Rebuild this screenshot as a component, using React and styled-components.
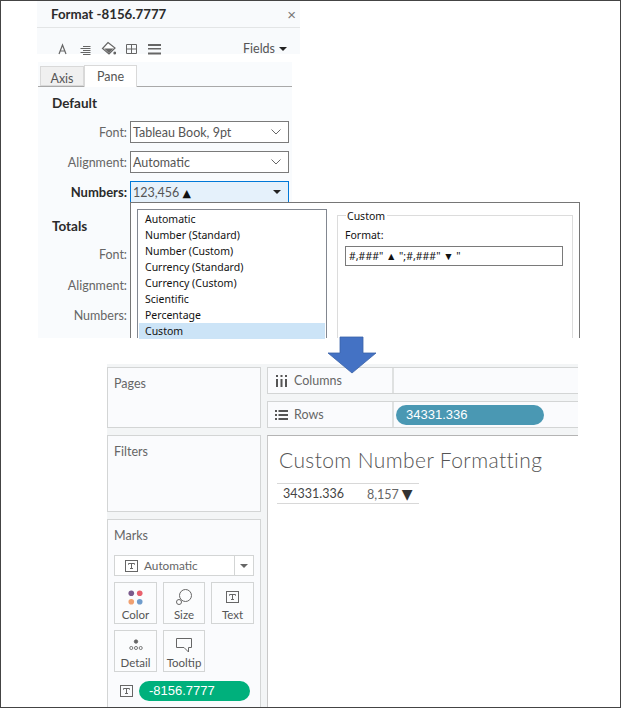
import styled, { createGlobalStyle } from 'styled-components';

const GlobalStyle = createGlobalStyle`
  * { box-sizing: border-box; }
  html, body { margin: 0; padding: 0; background: #fff; overflow: hidden; }
  body { font-family: Lato, "Liberation Sans", sans-serif; }
`;

const Frame = styled.div`
  position: relative;
  width: 621px;
  height: 708px;
  border: 1px solid #444;
  display: flex;
  flex-direction: column;
  background: #fff;
  overflow: hidden;
`;

/* ---------- format pane ---------- */

const TopArea = styled.div`
  position: relative;
  height: 363px;
  padding-left: 36px;
  flex: none;
`;

const FormatWindow = styled.div`
  width: 263px;
`;

const FormatHeader = styled.div`
  height: 27px;
  background: #f8fafc;
  border-bottom: 1px solid #e3e5e6;
  padding: 0 4px 0 14px;
  display: flex;
  align-items: center;
  justify-content: space-between;
  font-size: 13.3px;
  font-weight: 700;
  color: #2b2b2b;
`;

const CloseX = styled.span`
  font-family: "Liberation Sans", sans-serif;
  font-size: 15px;
  font-weight: 400;
  color: #777;
`;

const Toolbar = styled.div`
  height: 26px;
  background: #f8fafc;
  padding: 0 13px 0 18px;
  display: flex;
  align-items: flex-end;
  gap: 8px;
`;

const ToolIcon = styled.svg`
  width: 15px;
  height: 15px;
  flex: none;
  margin-bottom: -2px;
  color: #666;
`;

const FieldsButton = styled.span`
  margin-left: auto;
  margin-bottom: -2px;
  font-size: 12.5px;
  color: #555;
  line-height: 14px;
  display: flex;
  align-items: center;
  gap: 4px;
`;

const SmallCaret = styled.i`
  width: 0;
  height: 0;
  border-left: 4px solid transparent;
  border-right: 4px solid transparent;
  border-top: 4px solid ${(p) => p.$color || '#222'};
`;

const PaneBox = styled.div`
  width: 254px;
  height: 276px;
  margin: 8px 0 0 1px;
  background: #f9fbfd;
  overflow: hidden;
`;

const TabBar = styled.div`
  height: 25px;
  padding: 4px 0 0 2px;
  display: flex;
  align-items: flex-end;
  border-bottom: 1px solid #a9a9a9;
`;

const Tab = styled.div`
  height: ${(p) => (p.$active ? 22 : 20)}px;
  width: ${(p) => (p.$active ? 53 : 44)}px;
  margin-bottom: ${(p) => (p.$active ? -1 : 0)}px;
  background: ${(p) => (p.$active ? '#fff' : '#f0f0f0')};
  border: 1px solid #d9d9d9;
  border-bottom: ${(p) => (p.$active ? 'none' : '1px solid #d9d9d9')};
  font-size: 12.5px;
  color: #555;
  text-align: center;
  line-height: ${(p) => (p.$active ? 21 : 23)}px;
`;

const SectionTitle = styled.div`
  margin: ${(p) => p.$top}px 0 0 14px;
  font-size: 13.5px;
  font-weight: 700;
  line-height: 18px;
  color: #2b2b2b;
`;

const FormRow = styled.div`
  display: flex;
  align-items: center;
  height: 22px;
  margin-top: ${(p) => p.$top}px;
`;

const FieldLabel = styled.div`
  width: 89px;
  text-align: right;
  font-size: ${(p) => (p.$strong ? 13 : 12.5)}px;
  font-weight: ${(p) => (p.$strong ? 700 : 400)};
  color: ${(p) => (p.$strong ? '#2b2b2b' : '#666')};
`;

const SelectBox = styled.div`
  margin-left: 3px;
  width: 159px;
  height: 22px;
  padding: 0 7px 0 2px;
  display: flex;
  align-items: center;
  justify-content: space-between;
  font-size: 12.5px;
  color: #555;
  background: ${(p) => (p.$open ? '#e5f1fb' : '#fff')};
  border: 1px solid ${(p) => (p.$open ? '#0078d7' : '#7a7a7a')};
`;

const Chevron = styled.svg`
  width: 10px;
  height: 6px;
  color: #666;
`;

const TinyTriangle = styled.span`
  font-family: "DejaVu Sans", sans-serif;
  font-size: 11px;
  color: #111;
`;

/* ---------- number format popup ---------- */

const FormatPopup = styled.div`
  position: absolute;
  left: 129px;
  top: 201px;
  width: 450px;
  height: 136px;
  padding: 6px 6px 0 6px;
  background: #fff;
  border: 1px solid #767676;
  border-bottom: none;
  display: flex;
  font-family: "Noto Sans", Tahoma, sans-serif;
  font-size: 10.5px;
  color: #111;
`;

const FormatList = styled.div`
  width: 190px;
  flex: none;
  padding: 1px 1px 0 1px;
  border: 1px solid #828790;
  border-bottom: none;
`;

const FormatOption = styled.div`
  height: 16px;
  line-height: 17px;
  padding-left: 6px;
  background: ${(p) => (p.$selected ? '#cce4f7' : 'transparent')};
`;

const CustomGroup = styled.div`
  position: relative;
  flex: 1;
  margin: 6px 0 0 10px;
  padding: 12px 7px 0 7px;
  border: 1px solid #dcdcdc;
  border-bottom: none;
`;

const GroupLegend = styled.span`
  position: absolute;
  left: 8px;
  top: -6px;
  padding: 0 2px 0 1px;
  line-height: 13px;
  background: #fff;
`;

const FormatLabel = styled.div`
  line-height: 14px;
`;

const FormatInput = styled.div`
  margin-top: 4px;
  width: 218px;
  height: 20px;
  padding-left: 3px;
  border: 1px solid #7a7a7a;
  line-height: 18px;
  white-space: pre;
`;

const DownArrow = styled.svg`
  position: absolute;
  left: 326px;
  top: 335px;
  width: 50px;
  height: 38px;
  z-index: 2;
`;

/* ---------- tableau workspace ---------- */

const Workspace = styled.div`
  flex: 1;
  min-height: 0;
  width: 471px;
  margin-left: 106px;
  padding-top: 3px;
  background: #f3f5f6;
  display: grid;
  grid-template-columns: 154px 1fr;
  column-gap: 6px;
`;

const SideColumn = styled.div`
  display: flex;
  flex-direction: column;
  gap: 7px;
  min-height: 0;
`;

const Card = styled.div`
  height: ${(p) => (p.$height ? `${p.$height}px` : 'auto')};
  flex: ${(p) => (p.$height ? 'none' : 1)};
  padding: 8px 6px 0 6px;
  background: #fafbfd;
  border: 1px solid #d3d5d5;
  border-bottom-width: ${(p) => (p.$height ? 1 : 0)}px;
`;

const CardTitle = styled.div`
  font-size: 12.5px;
  line-height: 16px;
  color: #666;
`;

const MarkTypeSelect = styled.div`
  margin-top: 11px;
  height: 21px;
  display: flex;
  align-items: center;
  border: 1px solid #d3d5d5;
  background: #fff;
`;

const MarkTypeValue = styled.div`
  flex: 1;
  display: flex;
  align-items: center;
  gap: 6px;
  padding-left: 10px;
  font-size: 11.8px;
  color: #666;
  border-right: 1px solid #d3d5d5;
  height: 100%;
`;

const MarkTypeCaret = styled.div`
  width: 18px;
  display: flex;
  justify-content: center;
`;

const MarkGrid = styled.div`
  margin-top: 6px;
  display: grid;
  grid-template-columns: 43px 42px 43px;
  grid-auto-rows: 42px;
  gap: 6px;
`;

const MarkButton = styled.div`
  display: flex;
  flex-direction: column;
  align-items: center;
  padding-top: 5px;
  background: #fbfcfd;
  border: 1px solid #d3d5d5;
  font-size: 11.5px;
  color: #555;
`;

const MarkIconSlot = styled.div`
  height: 18px;
  display: flex;
  align-items: center;
  justify-content: center;
`;

const MarkLabel = styled.div`
  margin-top: 1px;
  line-height: 15px;
`;

const ShapeIcon = styled.svg`
  width: 13px;
  height: 12px;
  flex: none;
`;

const FieldRow = styled.div`
  margin-top: 9px;
  padding-left: 6px;
  display: flex;
  align-items: center;
  gap: 6px;
`;

const Pill = styled.div`
  height: 20px;
  width: ${(p) => p.$width}px;
  padding-left: 10px;
  border-radius: 10px;
  background: ${(p) => p.$color};
  color: #fff;
  font-family: "Liberation Sans", sans-serif;
  font-size: 13px;
  line-height: 19px;
`;

const MainColumn = styled.div`
  display: flex;
  flex-direction: column;
  gap: 7px;
  min-height: 0;
`;

const Shelf = styled.div`
  height: 27px;
  flex: none;
  display: flex;
  background: #fafbfd;
  border: 1px solid #d3d5d5;
  border-right: none;
`;

const ShelfName = styled.div`
  width: 126px;
  flex: none;
  display: flex;
  align-items: center;
  gap: 6px;
  padding-left: 7px;
  font-size: 12.5px;
  color: #666;
  border-right: 2px solid #dfe1e1;
`;

const ShelfBody = styled.div`
  flex: 1;
  padding: 3px 0 0 2px;
`;

const ViewPanel = styled.div`
  flex: 1;
  background: #fff;
  border-top: 1px solid #b4b4b4;
  border-left: 1px solid #c8c8c8;
  padding: 11px 0 0 9px;
`;

const ViewTitle = styled.div`
  margin-left: 2px;
  font-size: 21px;
  font-weight: 300;
  line-height: 26px;
  letter-spacing: 0.4px;
  color: #555;
`;

const ResultRow = styled.div`
  margin-top: 10px;
  width: 142px;
  height: 21px;
  display: flex;
  align-items: center;
  padding-left: 6px;
  border-top: 1px solid #d8d8d8;
  border-bottom: 1px solid #d8d8d8;
  font-size: 12.5px;
  color: #444;
`;

const ResultDimension = styled.span`
  width: 84px;
`;

const ResultValue = styled.span`
  color: #666;
`;

const ResultTriangle = styled.span`
  margin-left: 3px;
  font-family: "DejaVu Sans", sans-serif;
  font-size: 14px;
  color: #333;
`;

const FORMAT_OPTIONS = [
  'Automatic',
  'Number (Standard)',
  'Number (Custom)',
  'Currency (Standard)',
  'Currency (Custom)',
  'Scientific',
  'Percentage',
  'Custom',
];

function TIcon({ color = '#666' }) {
  return (
    <ShapeIcon viewBox="0 0 13 12">
      <rect x="0.5" y="0.5" width="12" height="11" fill="none" stroke={color} />
      <path d="M3.5 3.5h6M6.5 3.5v5M5 8.5h3M3.5 3.5v1.2M9.5 3.5v1.2" fill="none" stroke={color} />
    </ShapeIcon>
  );
}

function ChevronDown() {
  return (
    <Chevron viewBox="0 0 10 6">
      <path d="M0.5 0.5L5 5L9.5 0.5" fill="none" stroke="currentColor" />
    </Chevron>
  );
}

function FieldSelect({ label, value, top }) {
  return (
    <FormRow $top={top}>
      <FieldLabel>{label}</FieldLabel>
      <SelectBox>
        {value}
        <ChevronDown />
      </SelectBox>
    </FormRow>
  );
}

function MarkCard({ label, children }) {
  return (
    <MarkButton>
      <MarkIconSlot>{children}</MarkIconSlot>
      <MarkLabel>{label}</MarkLabel>
    </MarkButton>
  );
}

export default function App() {
  return (
    <Frame>
      <GlobalStyle />
      <TopArea>
        <FormatWindow>
          <FormatHeader>
            Format -8156.7777
            <CloseX>×</CloseX>
          </FormatHeader>
          <Toolbar>
            <ToolIcon viewBox="0 0 15 15" fill="none" stroke="currentColor">
              <path d="M4 13L7.5 4L11 13M5.2 10H9.8" strokeWidth="1.2" />
            </ToolIcon>
            <ToolIcon viewBox="0 0 15 15" fill="none" stroke="currentColor">
              <path d="M5 5.5H12.5M2.5 7.5H12.5M5 9.5H12.5M2.5 11.5H12.5M5 13.5H12.5" />
            </ToolIcon>
            <ToolIcon viewBox="0 0 15 15" fill="currentColor">
              <path d="M7 1.5L14 7L8 13L1.5 7.5Z" stroke="currentColor" strokeWidth="1.2" fill="#fff" />
              <path d="M3.2 7.5H12.4L8 12.2Z" />
              <circle cx="13.8" cy="12" r="1.5" />
            </ToolIcon>
            <ToolIcon viewBox="0 0 15 15" fill="none" stroke="currentColor">
              <path d="M2.5 3.5H12.5V12.5H2.5ZM2.5 8H12.5M7.5 3.5V12.5" />
            </ToolIcon>
            <ToolIcon viewBox="0 0 15 15" fill="currentColor">
              <path d="M1 3H14V5H1ZM1 7H14V8.5H1ZM1 11.5H14V13.5H1Z" />
            </ToolIcon>
            <FieldsButton>
              Fields <SmallCaret />
            </FieldsButton>
          </Toolbar>
          <PaneBox>
            <TabBar>
              <Tab>Axis</Tab>
              <Tab $active>Pane</Tab>
            </TabBar>
            <SectionTitle $top={7}>Default</SectionTitle>
            <FieldSelect label="Font:" value="Tableau Book, 9pt" top={9} />
            <FieldSelect label="Alignment:" value="Automatic" top={8} />
            <FormRow $top={8}>
              <FieldLabel $strong>Numbers:</FieldLabel>
              <SelectBox $open>
                <span>
                  123,456 <TinyTriangle>▲</TinyTriangle>
                </span>
                <SmallCaret />
              </SelectBox>
            </FormRow>
            <SectionTitle $top={14}>Totals</SectionTitle>
            <FieldSelect label="Font:" top={8} />
            <FieldSelect label="Alignment:" top={9} />
            <FieldSelect label="Numbers:" top={8} />
          </PaneBox>
        </FormatWindow>
        <FormatPopup>
          <FormatList>
            {FORMAT_OPTIONS.map((option) => (
              <FormatOption key={option} $selected={option === 'Custom'}>
                {option}
              </FormatOption>
            ))}
          </FormatList>
          <CustomGroup>
            <GroupLegend>Custom</GroupLegend>
            <FormatLabel>Format:</FormatLabel>
            <FormatInput>#,###" ▲ ";#,###" ▼ "</FormatInput>
          </CustomGroup>
        </FormatPopup>
      </TopArea>

      <DownArrow viewBox="0 0 50 38">
        <path d="M13 1H36V17H49L25 37L1 17H13Z" fill="#4472c4" stroke="#3a62a8" strokeWidth="0.8" />
      </DownArrow>

      <Workspace>
        <SideColumn>
          <Card $height={61}>
            <CardTitle>Pages</CardTitle>
          </Card>
          <Card $height={77}>
            <CardTitle>Filters</CardTitle>
          </Card>
          <Card>
            <CardTitle>Marks</CardTitle>
            <MarkTypeSelect>
              <MarkTypeValue>
                <TIcon />
                Automatic
              </MarkTypeValue>
              <MarkTypeCaret>
                <SmallCaret $color="#666" />
              </MarkTypeCaret>
            </MarkTypeSelect>
            <MarkGrid>
              <MarkCard label="Color">
                <svg width="15" height="15" viewBox="0 0 16 16">
                  <circle cx="3.5" cy="3.5" r="3" fill="#7b5b8c" />
                  <circle cx="12.5" cy="3.5" r="3" fill="#e8616d" />
                  <circle cx="3.5" cy="12.5" r="3" fill="#f0a070" />
                  <circle cx="12.5" cy="12.5" r="3" fill="#6f9ccc" />
                </svg>
              </MarkCard>
              <MarkCard label="Size">
                <svg width="16" height="16" viewBox="0 0 16 16" fill="none" stroke="#666">
                  <circle cx="9.5" cy="6.5" r="6" />
                  <circle cx="3" cy="13" r="2.5" fill="#fff" />
                </svg>
              </MarkCard>
              <MarkCard label="Text">
                <TIcon />
              </MarkCard>
              <MarkCard label="Detail">
                <svg width="14" height="12" viewBox="0 0 16 14" fill="none" stroke="#666">
                  <circle cx="8" cy="3" r="2" fill="#666" />
                  <circle cx="2.5" cy="10.5" r="1.8" />
                  <circle cx="8" cy="10.5" r="1.8" />
                  <circle cx="13.5" cy="10.5" r="1.8" />
                </svg>
              </MarkCard>
              <MarkCard label="Tooltip">
                <svg width="16" height="15" viewBox="0 0 16 15" fill="none" stroke="#666">
                  <path d="M0.5 0.5H15.5V9.5H12.5V14L8 9.5H0.5Z" />
                </svg>
              </MarkCard>
            </MarkGrid>
            <FieldRow>
              <TIcon />
              <Pill $color="#00b07c" $width={111}>
                -8156.7777
              </Pill>
            </FieldRow>
          </Card>
        </SideColumn>
        <MainColumn>
          <Shelf>
            <ShelfName>
              <svg width="13" height="12" viewBox="0 0 13 12" fill="#555">
                <path d="M1 4H3V12H1ZM5.5 4H7.5V12H5.5ZM10 4H12V12H10ZM1 0H3V2H1ZM5.5 0H7.5V2H5.5ZM10 0H12V2H10Z" />
              </svg>
              Columns
            </ShelfName>
            <ShelfBody />
          </Shelf>
          <Shelf>
            <ShelfName>
              <svg width="13" height="10" viewBox="0 0 13 10" fill="#555">
                <path d="M0 0H2V2H0ZM3.5 0H13V2H3.5ZM0 4H2V6H0ZM3.5 4H13V6H3.5ZM0 8H2V10H0ZM3.5 8H13V10H3.5Z" />
              </svg>
              Rows
            </ShelfName>
            <ShelfBody>
              <Pill $color="#4a98b3" $width={148}>
                34331.336
              </Pill>
            </ShelfBody>
          </Shelf>
          <ViewPanel>
            <ViewTitle>Custom Number Formatting</ViewTitle>
            <ResultRow>
              <ResultDimension>34331.336</ResultDimension>
              <ResultValue>
                8,157<ResultTriangle>▼</ResultTriangle>
              </ResultValue>
            </ResultRow>
          </ViewPanel>
        </MainColumn>
      </Workspace>
    </Frame>
  );
}
